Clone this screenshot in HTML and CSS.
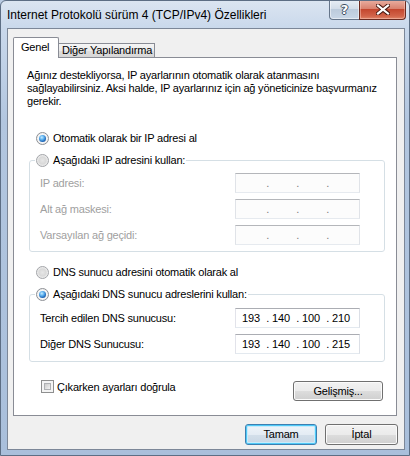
FILE: index.html
```html
<!DOCTYPE html>
<html lang="tr">
<head>
<meta charset="utf-8">
<title>Internet Protokolü sürüm 4 (TCP/IPv4) Özellikleri</title>
<link rel="stylesheet" href="styles.css">
</head>
<body>
<div class="window">
  <div class="titlebar">
    <div class="title">Internet Protokolü sürüm 4 (TCP/IPv4) Özellikleri</div>
    <div class="caption">
      <div class="cap-btn help"><span class="help-glyph">?</span></div>
      <div class="cap-btn close">
        <svg width="14" height="11" viewBox="0 0 14 11">
          <path d="M2 1.5 L12 9.5 M12 1.5 L2 9.5" stroke="#4a1a12" stroke-width="4.2" stroke-linecap="square" fill="none"/>
          <path d="M2 1.5 L12 9.5 M12 1.5 L2 9.5" stroke="#ffffff" stroke-width="2.2" stroke-linecap="square" fill="none"/>
        </svg>
      </div>
    </div>
  </div>
  <div class="client">
    <div class="tabs">
      <div class="tab active">Genel</div>
      <div class="tab inactive">Diğer Yapılandırma</div>
    </div>
    <div class="panel">
      <p class="intro">Ağınız destekliyorsa, IP ayarlarının otomatik olarak atanmasını<br>sağlayabilirsiniz. Aksi halde, IP ayarlarınız için ağ yöneticinize başvurmanız<br>gerekir.</p>

      <div class="radio-row first">
        <span class="radio checked"></span><span>Otomatik olarak bir IP adresi al</span>
      </div>

      <fieldset class="group group-ip">
        <legend>
          <span class="radio-row in-legend"><span class="radio"></span><span>Aşağıdaki IP adresini kullan:</span></span>
        </legend>
        <div class="field-row">
          <span class="label disabled">IP adresi:</span>
          <span class="ipbox off"><span class="oct"></span><span class="dot">.</span><span class="oct"></span><span class="dot">.</span><span class="oct"></span><span class="dot">.</span><span class="oct"></span></span>
        </div>
        <div class="field-row">
          <span class="label disabled">Alt ağ maskesi:</span>
          <span class="ipbox off"><span class="oct"></span><span class="dot">.</span><span class="oct"></span><span class="dot">.</span><span class="oct"></span><span class="dot">.</span><span class="oct"></span></span>
        </div>
        <div class="field-row">
          <span class="label disabled">Varsayılan ağ geçidi:</span>
          <span class="ipbox off"><span class="oct"></span><span class="dot">.</span><span class="oct"></span><span class="dot">.</span><span class="oct"></span><span class="dot">.</span><span class="oct"></span></span>
        </div>
      </fieldset>

      <div class="radio-row dns-auto">
        <span class="radio"></span><span>DNS sunucu adresini otomatik olarak al</span>
      </div>

      <fieldset class="group group-dns">
        <legend>
          <span class="radio-row in-legend"><span class="radio checked"></span><span>Aşağıdaki DNS sunucu adreslerini kullan:</span></span>
        </legend>
        <div class="field-row">
          <span class="label">Tercih edilen DNS sunucusu:</span>
          <span class="ipbox"><span class="oct">193</span><span class="dot">.</span><span class="oct">140</span><span class="dot">.</span><span class="oct">100</span><span class="dot">.</span><span class="oct">210</span></span>
        </div>
        <div class="field-row">
          <span class="label">Diğer DNS Sunucusu:</span>
          <span class="ipbox"><span class="oct">193</span><span class="dot">.</span><span class="oct">140</span><span class="dot">.</span><span class="oct">100</span><span class="dot">.</span><span class="oct">215</span></span>
        </div>
      </fieldset>

      <div class="bottom-row">
        <label class="check-row"><span class="checkbox"></span><span>Çıkarken ayarları doğrula</span></label>
        <button class="btn adv">Gelişmiş...</button>
      </div>
    </div>

    <div class="actions">
      <button class="btn default">Tamam</button>
      <button class="btn cancel">İptal</button>
    </div>
  </div>
</div>
</body>
</html>
```
FILE: styles.css
```css
* { box-sizing: border-box; }
html, body { margin: 0; padding: 0; }
body {
  width: 410px;
  height: 456px;
  overflow: hidden;
  background: #b9cbe2;
  font-family: "Liberation Sans", Arial, sans-serif;
  font-size: 11px;
  letter-spacing: -0.2px;
  color: #000;
}

.window {
  width: 410px;
  height: 456px;
  border: 1px solid #5d6e84;
  border-radius: 6px 6px 0 0;
  background: linear-gradient(to bottom, #dbe5f1 0px, #c9d8eb 28px, #b2c6df 120px, #a9bfdb 100%);
  display: flex;
  flex-direction: column;
  overflow: hidden;
}

/* title bar */
.titlebar {
  height: 27px;
  display: flex;
  justify-content: space-between;
  align-items: flex-start;
  flex: none;
}
.title {
  padding: 6px 0 0 6px;
  font-size: 12px;
  letter-spacing: 0;
  line-height: 16px;
  color: #000;
  white-space: nowrap;
}
.caption {
  display: flex;
  margin: -1px 3px 0 0;
}
.cap-btn {
  height: 20px;
  display: flex;
  align-items: center;
  justify-content: center;
  border: 1px solid #65758a;
  border-top: none;
}
.help {
  width: 30px;
  border-right: none;
  border-radius: 0 0 0 4px;
  background: linear-gradient(to bottom, #e8eef5 0%, #d3dde9 45%, #bccbdc 50%, #c9d7e7 100%);
  box-shadow: inset 0 0 0 1px rgba(255,255,255,0.5);
}
.help-glyph {
  font-family: "DejaVu Sans", sans-serif;
  font-weight: bold;
  font-size: 13px;
  letter-spacing: 0;
  line-height: 14px;
  color: #fff;
  text-shadow: 1px 0 0 #3d4c60, -1px 0 0 #3d4c60, 0 1px 0 #3d4c60, 0 -1px 0 #3d4c60;
}
.close {
  width: 47px;
  border-color: #6a2a20;
  border-radius: 0 0 4px 0;
  background: linear-gradient(to bottom, #eab0a2 0%, #d9826f 45%, #c4472f 50%, #d2644a 85%, #e0866a 100%);
  box-shadow: inset 0 0 0 1px rgba(255,210,200,0.45);
}

/* client area */
.client {
  margin-left: 6px;
  width: 398px;
  height: 422px;
  border: 1px solid #7c8798;
  background: #f0f0f0;
  padding: 8px 0 0 5px;
  flex: none;
}

.tabs {
  display: flex;
  align-items: flex-end;
  height: 21px;
  margin-bottom: -1px;
  position: relative;
  z-index: 1;
}
.tab {
  white-space: nowrap;
  border: 1px solid #898c95;
  border-bottom: none;
}
.tab.active {
  width: 46px;
  height: 21px;
  background: #fff;
  padding: 1px 0 0 7px;
  line-height: 16px;
  border-radius: 2px 2px 0 0;
}
.tab.inactive {
  width: 96px;
  height: 14px;
  margin-bottom: 1px;
  border-left: none;
  padding-left: 3px;
  line-height: 13px;
  background: linear-gradient(to bottom, #f5f5f5 0%, #ebebeb 50%, #dedede 51%, #d6d6d6 100%);
}

.panel {
  width: 384px;
  border: 1px solid #898c95;
  background: #fff;
  padding: 0 11px 14px 13px;
}

.intro {
  margin: 11px 0 0;
  line-height: 13px;
  white-space: nowrap;
}

.radio-row {
  display: flex;
  align-items: center;
  height: 16px;
  gap: 4px;
  white-space: nowrap;
}
.radio-row.first { margin: 22px 0 0 9px; }
.radio-row.dns-auto { margin: 12px 0 0 9px; }
.radio-row.in-legend { margin: 0; }

.radio {
  width: 13px;
  height: 13px;
  border-radius: 50%;
  border: 1px solid #a2a4a8;
  background: radial-gradient(circle at 50% 50%, #e6e6e6 0%, #d9d9d9 45%, #f2f2f2 75%, #ffffff 100%);
  position: relative;
  flex: none;
}
.radio.checked {
  border-color: #8d9095;
  background: radial-gradient(circle at 50% 50%, #ffffff 0%, #f4f4f4 60%, #e2e2e2 100%);
}
.radio.checked::after {
  content: "";
  position: absolute;
  left: 2px;
  top: 2px;
  width: 7px;
  height: 7px;
  border-radius: 50%;
  background: radial-gradient(circle at 40% 35%, #c6ecff 0%, #5fb2ef 35%, #1b63b5 70%, #0f3f7c 100%);
}

.group {
  margin: 6px 0 0 2px;
  border: 1px solid #d5dfe5;
  border-radius: 3px;
  min-width: 0;
}
.group-ip { padding: 5px 24px 6px 10px; }
.group-dns { padding: 6px 24px 7px 10px; }
.group legend {
  padding: 0 1px;
  margin-left: -5px;
  height: 16px;
}

.field-row {
  display: flex;
  justify-content: space-between;
  align-items: center;
  height: 20px;
}
.field-row + .field-row { margin-top: 6px; }
.label { white-space: nowrap; }
.label.disabled { color: #a0a0a0; }

.ipbox {
  width: 125px;
  height: 20px;
  border: 1px solid;
  border-color: #abadb3 #dbdfe6 #e3e9ef #e2e3ea;
  background: #fff;
  display: flex;
  align-items: center;
  padding-left: 3px;
}
.ipbox.off {
  background: #fcfcfc;
  border-color: #b4b6ba #e0e3e8 #e6eaef #e0e3e8;
}
.oct {
  width: 24px;
  text-align: center;
  flex: none;
}
.dot {
  width: 6px;
  text-align: right;
  flex: none;
}
.ipbox.off .dot { color: #7b7b7b; }

.bottom-row {
  display: flex;
  justify-content: space-between;
  align-items: flex-start;
  margin-top: 18px;
  padding-right: 2px;
}
.check-row {
  display: flex;
  align-items: center;
  gap: 3px;
  margin-left: 14px;
  height: 13px;
  white-space: nowrap;
}
.checkbox {
  width: 13px;
  height: 13px;
  border: 1px solid #8e8f8f;
  background: #f4f4f4;
  flex: none;
  position: relative;
}
.checkbox::after {
  content: "";
  position: absolute;
  left: 2px;
  top: 2px;
  right: 2px;
  bottom: 2px;
  background: linear-gradient(135deg, #cbcbcb 0%, #dedede 50%, #f3f3f3 100%);
  border: 1px solid #aeb0b3;
}

.btn {
  height: 21px;
  margin: 0;
  padding: 0;
  border: 1px solid #707070;
  border-radius: 3px;
  background: linear-gradient(to bottom, #f2f2f2 0%, #ebebeb 50%, #dddddd 51%, #cfcfcf 100%);
  box-shadow: inset 0 0 0 1px #fbfbfb;
  font-family: "Liberation Sans", Arial, sans-serif;
  font-size: 11px;
  letter-spacing: -0.2px;
  line-height: 19px;
  color: #000;
  text-align: center;
}
.btn.adv {
  width: 90px;
  height: 20px;
  line-height: 18px;
  margin-top: 1px;
}

.actions {
  display: flex;
  justify-content: flex-end;
  gap: 8px;
  margin-top: 8px;
  padding-right: 6px;
}
.btn.default {
  width: 72px;
  border-color: #3c7fb1;
  box-shadow: inset 0 0 0 1px #4fc9f7, inset 0 0 0 2px #c7ebfb;
  background: linear-gradient(to bottom, #eef4f9 0%, #e4ecf4 50%, #d3dfea 51%, #c8d6e4 100%);
}
.btn.cancel { width: 73px; }
```
